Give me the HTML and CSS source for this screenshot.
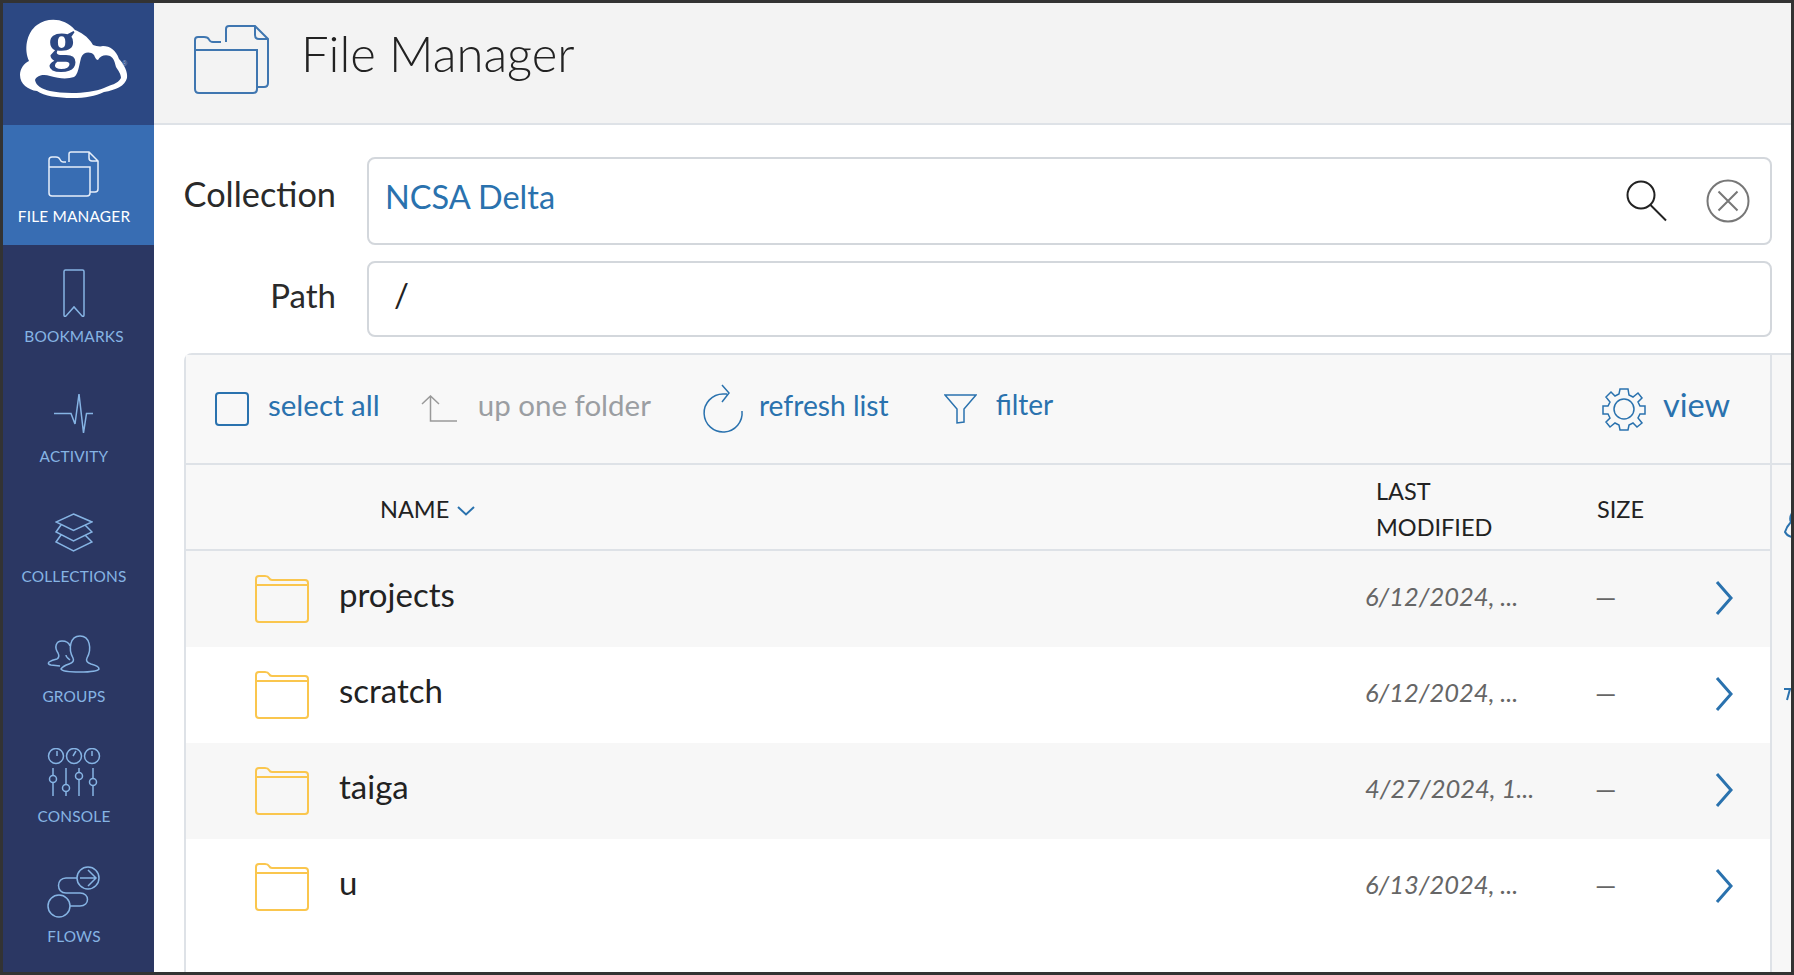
FILE: index.html
```html
<!DOCTYPE html>
<html lang="en">
<head>
    <meta charset="UTF-8">
    <title>File Manager</title>
    <link rel="stylesheet" href="styles.css">
</head>
<body>
<div class="window">
    <aside class="sidebar">
        <a class="logo" href="#">
            <svg width="151" height="122" viewBox="3 3 151 122">
                <path class="cloud" d="M29 61C24 50 26 33 37 25C48 17 65 18 75 30C80 32 88 36 93 45C96 46 100 47 103 46C110 46 116 50 119 59C124 64 128 72 127 78C125 86 116 90 104 92C95 96 86 98 72 98C58 98 44 96 37 91C28 90 20 84 20 75C20 69 24 63 29 61Z"/>
                <path class="cloud-in" d="M35 80C37 75 44 74 50 76C60 79 68 79 74 77C78 75 79 66 81 58C83 52 90 51 94 55C95 57 96 60 98 60C100 56 105 54 110 56C114 58 115 63 116 67C118 70 121 74 121 78C118 84 110 85 104 88C90 94 64 94 50 91C42 89 36 86 35 80Z"/>
                <text class="logo-g" x="48" y="60">g</text>
                <text class="logo-r" x="122" y="66">®</text>
            </svg>
        </a>
        <a class="nav-item active" href="#">
            <svg class="nav-icon" width="52" height="48" viewBox="0 0 52 48">
                <path d="M1 16V9Q1 6 4 6H8Q11 6 12 8.500Q13 11 15 11H18M21 11V3Q21 1 23 1H41L50 10V38Q50 41 47 41H42M41 1V7Q41 10 44 10H50M1 16H42V42Q42 45 39 45H4Q1 45 1 42Z"/>
            </svg>
            <span>FILE MANAGER</span>
        </a>
        <a class="nav-item" href="#">
            <svg class="nav-icon" width="24" height="50" viewBox="0 0 24 50">
                <path d="M2 2.500Q2 1 3.500 1H20.500Q22 1 22 2.500V46Q22 48 20 47L12 38L4 47Q2 48 2 46Z"/>
            </svg>
            <span>BOOKMARKS</span>
        </a>
        <a class="nav-item" href="#">
            <svg class="nav-icon" width="42" height="46" viewBox="0 0 42 46">
                <path d="M1 20.500H18L22 31L26 1L30.500 40L33.500 20.500H40"/>
            </svg>
            <span>ACTIVITY</span>
        </a>
        <a class="nav-item" href="#">
            <svg class="nav-icon" width="38" height="46" viewBox="0 0 38 46">
                <path d="M18.500 1L37 9L18.500 17.500L1 9ZM6 12L1 19L18.500 28L37 19L30 12M6 22L1 29L18.500 38L37 29L30 22"/>
            </svg>
            <span>COLLECTIONS</span>
        </a>
        <a class="nav-item" href="#">
            <svg class="nav-icon" width="54" height="44" viewBox="0 0 54 44">
                <path d="M26 23C21 14 23 1 33 1C43 1 45 14 40 23Q38 27 44 29Q52 31 52 34Q50 37 33 37Q15 37 14 34Q16 31 22 29Q28 27 26 23Z"/>
                <path d="M13 31L4 30Q0 29 2 27Q5 25 10 24Q13 22 11 18C7 12 9 6 15 6C19 6 22 8 23 11M19 20Q19 22 23 25"/>
            </svg>
            <span>GROUPS</span>
        </a>
        <a class="nav-item" href="#">
            <svg class="nav-icon" width="54" height="51" viewBox="0 0 54 51">
                <circle cx="9" cy="8" r="7.500"/><circle cx="27" cy="8" r="7.500"/><circle cx="45" cy="8" r="7.500"/>
                <path d="M10 3L10 8M29 3L26 8M45 3V8"/>
                <path d="M6 20V27.500M6 34.500V48M19 20V36.500M19 43.500V48M32 20V24.500M32 31.500V48M46 20V30.500M46 37.500V48"/>
                <circle cx="6" cy="31" r="3.500"/><circle cx="19" cy="40" r="3.500"/><circle cx="32" cy="28" r="3.500"/><circle cx="46" cy="34" r="3.500"/>
            </svg>
            <span>CONSOLE</span>
        </a>
        <a class="nav-item" href="#">
            <svg class="nav-icon" width="54" height="53" viewBox="0 0 54 53">
                <circle cx="41" cy="12" r="11"/><circle cx="12" cy="40" r="11"/>
                <path d="M33 12H49M41 4L49 12L41 20"/>
                <path d="M30 12H19C9 12 9 27 19 27H33C43 27 43 40 33 40H23"/>
            </svg>
            <span>FLOWS</span>
        </a>
    </aside>
    <div class="content">
        <header class="page-header">
            <svg class="page-icon" width="76" height="70" viewBox="0 0 76 70">
                <path d="M1 24V15Q1 12 4 12H10Q14 12 15 14.500Q16 17 19 17H27M32 17V4Q32 1 35 1H61L74 14V58Q74 62 70 62H63M61 1V10Q61 14 65 14H74M1 25H63V64Q63 68 59 68H5Q1 68 1 64Z"/>
            </svg>
            <h1>File Manager</h1>
        </header>
        <form class="fields">
            <label class="label-collection">Collection</label>
            <div class="input input-collection">
                <span class="collection-name">NCSA Delta</span>
                <svg class="search-icon" width="42" height="42" viewBox="0 0 42 42">
                    <circle cx="15" cy="15" r="13.500"/>
                    <path d="M24.500 25L40 40.500"/>
                </svg>
                <svg class="clear-icon" width="44" height="44" viewBox="0 0 44 44">
                    <circle cx="22" cy="22" r="20.500"/>
                    <path d="M12.500 12.500L31.500 31.500M31.500 12.500L12.500 31.500"/>
                </svg>
            </div>
            <label class="label-path">Path</label>
            <div class="input input-path">/</div>
        </form>
        <div class="panel-wrap">
            <section class="panel">
                <div class="toolbar">
                    <a class="tool select-all" href="#"><i class="checkbox"></i><span>select all</span></a>
                    <a class="tool up disabled" href="#">
                        <svg width="36" height="28" viewBox="0 0 36 28"><path d="M1 9L9.500 1L18 9M9.500 1V26H36"/></svg>
                        <span>up one folder</span>
                    </a>
                    <a class="tool refresh" href="#">
                        <svg width="42" height="50" viewBox="0 0 42 50"><path d="M40 27A19 19 0 1 1 21 10H25M20 1L27 9L20 18"/></svg>
                        <span>refresh list</span>
                    </a>
                    <a class="tool filter" href="#">
                        <svg width="33" height="30" viewBox="0 0 33 30"><path d="M1 1H32L20 15V28L13 29V15Z"/></svg>
                        <span>filter</span>
                    </a>
                    <a class="tool view" href="#">
                        <svg width="44" height="44" viewBox="0 0 44 44">
                            <circle cx="22" cy="22" r="10"/>
                            <path d="M18 2H26L27 8L31 10L36 6L40 11L36 15L38 19L43 19V27L38 27L36 31L40 36L35 40L31 36L27 38L26 43H18L17 38L13 36L8 40L4 35L8 31L6 27L1 27V19L6 19L8 15L4 10L9 5L13 9L17 7Z"/>
                        </svg>
                        <span>view</span>
                    </a>
                </div>
                <div class="table-head">
                    <div class="col-name">NAME
                        <svg width="18" height="10" viewBox="0 0 18 10"><path d="M1 1L9 8.500L17 1"/></svg>
                    </div>
                    <div class="col-date">LAST<br>MODIFIED</div>
                    <div class="col-size">SIZE</div>
                </div>
                <div class="rows">
                    <div class="row">
                        <svg class="folder" width="54" height="48" viewBox="0 0 54 48"><path d="M1 9V4Q1 1 4 1H10Q13 1 14 3Q15 5 17 5H50Q53 5 53 8V44Q53 47 50 47H4Q1 47 1 44ZM1 10H53"/></svg>
                        <span class="name">projects</span>
                        <span class="date">6/12/2024, ...</span>
                        <span class="size">—</span>
                        <svg class="chevron" width="18" height="34" viewBox="0 0 18 34"><path d="M2 1L16 17L2 33"/></svg>
                    </div>
                    <div class="row">
                        <svg class="folder" width="54" height="48" viewBox="0 0 54 48"><path d="M1 9V4Q1 1 4 1H10Q13 1 14 3Q15 5 17 5H50Q53 5 53 8V44Q53 47 50 47H4Q1 47 1 44ZM1 10H53"/></svg>
                        <span class="name">scratch</span>
                        <span class="date">6/12/2024, ...</span>
                        <span class="size">—</span>
                        <svg class="chevron" width="18" height="34" viewBox="0 0 18 34"><path d="M2 1L16 17L2 33"/></svg>
                    </div>
                    <div class="row">
                        <svg class="folder" width="54" height="48" viewBox="0 0 54 48"><path d="M1 9V4Q1 1 4 1H10Q13 1 14 3Q15 5 17 5H50Q53 5 53 8V44Q53 47 50 47H4Q1 47 1 44ZM1 10H53"/></svg>
                        <span class="name">taiga</span>
                        <span class="date">4/27/2024, 1...</span>
                        <span class="size">—</span>
                        <svg class="chevron" width="18" height="34" viewBox="0 0 18 34"><path d="M2 1L16 17L2 33"/></svg>
                    </div>
                    <div class="row">
                        <svg class="folder" width="54" height="48" viewBox="0 0 54 48"><path d="M1 9V4Q1 1 4 1H10Q13 1 14 3Q15 5 17 5H50Q53 5 53 8V44Q53 47 50 47H4Q1 47 1 44ZM1 10H53"/></svg>
                        <span class="name">u</span>
                        <span class="date">6/13/2024, ...</span>
                        <span class="size">—</span>
                        <svg class="chevron" width="18" height="34" viewBox="0 0 18 34"><path d="M2 1L16 17L2 33"/></svg>
                    </div>
                </div>
            </section>
            <div class="side-strip">
                <div class="strip-top"></div>
                <svg class="strip-a" width="8" height="28" viewBox="0 0 8 28"><path d="M8 1Q5 6 7 10Q3 14 1 20Q3 24 8 25"/></svg>
                <svg class="strip-b" width="8" height="14" viewBox="0 0 8 14"><path d="M0 2H8M6 2L3 13"/></svg>
            </div>
        </div>
    </div>
</div>
</body>
</html>
```

FILE: styles.css
```css
* {
    box-sizing: border-box;
}
html, body {
    height: 100%;
}
body {
    margin: 0;
    padding: 3px;
    background-color: #333;
    font-family: Lato, "Open Sans", Arial, sans-serif;
    color: #222;
    overflow: hidden;
}
a {
    text-decoration: none;
    color: inherit;
}
svg {
    display: block;
    flex: none;
    fill: none;
}
.window {
    display: flex;
    height: 100%;
    background-color: #fff;
}

/* left nav */
.sidebar {
    width: 151px;
    flex: none;
    background-color: #2b3763;
    display: flex;
    flex-direction: column;
    overflow: hidden;
}
.logo {
    height: 122px;
    flex: none;
    background-color: #2c4883;
}
.cloud {
    fill: #fff;
}
.cloud-in {
    fill: #2c4883;
}
.logo-g {
    font-family: "Liberation Serif", serif;
    font-weight: 700;
    font-size: 56px;
    fill: #2c4883;
}
.logo-r {
    font-family: "Liberation Sans", sans-serif;
    font-size: 7px;
    fill: #9db3d6;
}
.nav-item {
    height: 120px;
    flex: none;
    display: flex;
    flex-direction: column;
    align-items: center;
    justify-content: flex-end;
    padding: 0 9px 20px 0;
    color: #86b4e4;
    font-size: 15.400px;
    letter-spacing: 0.200px;
}
.nav-item span {
    margin-top: 8px;
    line-height: 18px;
}
.nav-icon {
    stroke: #86b4e4;
    stroke-width: 1.500;
}
.nav-item.active {
    background-color: #386db3;
    color: #fff;
}
.nav-item.active .nav-icon {
    stroke: #e6eefa;
}

/* main */
.content {
    flex: 1;
    min-width: 0;
    display: flex;
    flex-direction: column;
}
.page-header {
    height: 122px;
    flex: none;
    display: flex;
    align-items: center;
    gap: 31px;
    padding: 0 0 6px 40px;
    background-color: #f3f3f3;
    border-bottom: 2px solid #dee2e7;
}
.page-icon {
    stroke: #3f76b0;
    stroke-width: 2;
}
.page-header h1 {
    margin: 0 0 14px;
    font-size: 49px;
    font-weight: 300;
    color: #222;
}
.fields {
    display: grid;
    grid-template-columns: 182px 1405px;
    row-gap: 16px;
    column-gap: 31px;
    margin-top: 32px;
    align-items: center;
}
.fields label {
    font-size: 34.300px;
    text-align: right;
    color: #2a2a2a;
}
.label-collection {
    padding-bottom: 16px;
}
.fields .label-path {
    font-size: 33px;
    padding-bottom: 8px;
}
.input {
    border: 2px solid #d3d7dc;
    border-radius: 8px;
    display: flex;
    align-items: center;
    font-size: 33px;
}
.input-collection {
    height: 88px;
    padding-left: 16px;
    padding-right: 20px;
}
.input-path {
    height: 76px;
    padding-left: 25px;
    padding-bottom: 10px;
}
.collection-name {
    color: #2a72ae;
    flex: 1;
    font-size: 32.500px;
    padding-bottom: 10px;
}
.search-icon {
    stroke: #222;
    stroke-width: 2;
    margin-right: 38px;
}
.clear-icon {
    stroke: #777;
    stroke-width: 2;
}
.panel-wrap {
    flex: 1;
    display: flex;
    margin-top: 16px;
    margin-left: 30px;
    min-height: 0;
}
.panel {
    width: 1588px;
    flex: none;
    border-top: 2px solid #dee2e7;
    border-left: 2px solid #dee2e7;
    border-right: 2px solid #dee2e7;
    border-top-left-radius: 8px;
    display: flex;
    flex-direction: column;
    background-color: #fff;
}
.side-strip {
    flex: 1;
    background-color: #f7f7f7;
    border-top: 2px solid #dee2e7;
    overflow: hidden;
}
.strip-top {
    height: 110px;
    border-bottom: 2px solid #dee2e7;
}
.side-strip svg {
    stroke: #2a72ae;
    stroke-width: 2;
    margin-left: 12px;
}
.strip-a {
    margin-top: 47px;
}
.strip-b {
    margin-top: 147px;
}

/* toolbar */
.toolbar {
    height: 110px;
    flex: none;
    display: flex;
    align-items: center;
    padding: 0 40px 0 29px;
    background-color: #f8f8f8;
    border-bottom: 2px solid #dee2e7;
    color: #2a72ae;
    font-size: 29.500px;
}
.tool {
    display: flex;
    align-items: center;
}
.tool span {
    margin-bottom: 10px;
}
.tool svg {
    stroke: #2a72ae;
    stroke-width: 1.500;
}
.checkbox {
    width: 34px;
    height: 34px;
    border: 2px solid #2a72ae;
    border-radius: 4px;
    margin-right: 19px;
}
.select-all {
    margin-right: 41px;
}
.up svg {
    margin-right: 21px;
}
.up.disabled {
    color: #9b9ea2;
    margin-right: 51px;
}
.up.disabled svg {
    stroke: #999;
}
.refresh {
    margin-right: 55px;
    font-size: 28.200px;
}
.refresh svg {
    margin-right: 15px;
}
.refresh span {
    margin-bottom: 8px;
}
.filter {
    font-size: 28px;
}
.filter svg {
    margin-right: 19px;
}
.view {
    margin-left: auto;
    font-size: 32.500px;
}
.view svg {
    margin-right: 17px;
}

/* table */
.table-head {
    height: 86px;
    flex: none;
    display: flex;
    align-items: center;
    padding-top: 4px;
    background-color: #f8f8f8;
    border-bottom: 2px solid #dee2e7;
    font-size: 23.500px;
    line-height: 36px;
}
.col-name {
    width: 1190px;
    padding-left: 194px;
    display: flex;
    align-items: center;
    gap: 8px;
}
.col-name svg {
    stroke: #2a72ae;
    stroke-width: 2;
    margin-top: 4px;
}
.col-date {
    width: 221px;
}
.row {
    height: 96px;
    display: flex;
    align-items: center;
}
.row:nth-child(odd) {
    background-color: #f7f7f7;
}
.folder {
    margin-left: 69px;
    stroke: #fac64e;
    stroke-width: 2;
}
.name {
    margin-left: 30px;
    margin-bottom: 10px;
    width: 1026px;
    font-size: 33px;
    flex: none;
}
.date {
    width: 230px;
    flex: none;
    margin-bottom: 7px;
    font-size: 25.500px;
    font-style: italic;
    color: #666;
}
.size {
    width: 120px;
    flex: none;
    margin-bottom: 5px;
    font-size: 27px;
    color: #666;
}
.chevron {
    stroke: #2a72ae;
    stroke-width: 3;
    margin-bottom: 2px;
}
```
